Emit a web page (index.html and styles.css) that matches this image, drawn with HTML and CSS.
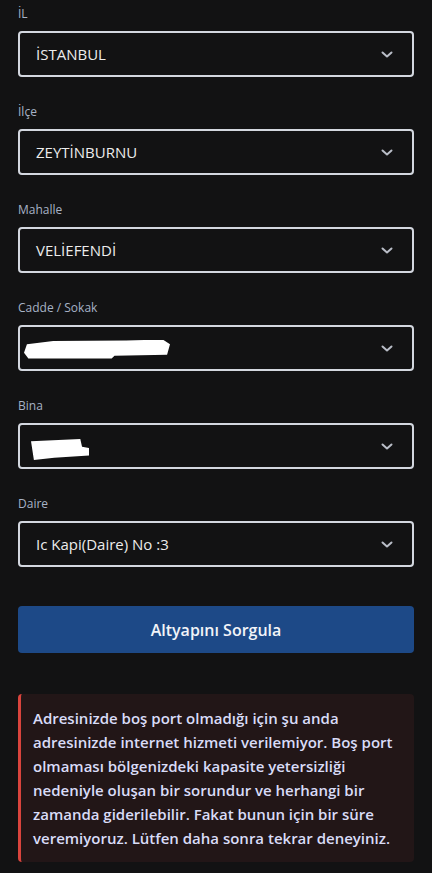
FILE: index.html
```html
<!DOCTYPE html>
<html>
<head>
<meta charset="utf-8">
<link rel="stylesheet" href="styles.css">
</head>
<body>
<div class="form">
  <div class="field">
    <div class="label">İL</div>
    <div class="select"><span class="value">İSTANBUL</span><svg class="chev" viewBox="0 0 12 7"><path d="M1.5 1.5 L6 5.5 L10.5 1.5"/></svg></div>
  </div>
  <div class="field">
    <div class="label">İlçe</div>
    <div class="select"><span class="value">ZEYTİNBURNU</span><svg class="chev" viewBox="0 0 12 7"><path d="M1.5 1.5 L6 5.5 L10.5 1.5"/></svg></div>
  </div>
  <div class="field">
    <div class="label">Mahalle</div>
    <div class="select"><span class="value">VELİEFENDİ</span><svg class="chev" viewBox="0 0 12 7"><path d="M1.5 1.5 L6 5.5 L10.5 1.5"/></svg></div>
  </div>
  <div class="field">
    <div class="label">Cadde / Sokak</div>
    <div class="select"><span class="blob blob-street"></span><svg class="chev" viewBox="0 0 12 7"><path d="M1.5 1.5 L6 5.5 L10.5 1.5"/></svg></div>
  </div>
  <div class="field">
    <div class="label">Bina</div>
    <div class="select"><span class="blob blob-bina"></span><svg class="chev" viewBox="0 0 12 7"><path d="M1.5 1.5 L6 5.5 L10.5 1.5"/></svg></div>
  </div>
  <div class="field last">
    <div class="label">Daire</div>
    <div class="select"><span class="value">Ic Kapi(Daire) No :3</span><svg class="chev" viewBox="0 0 12 7"><path d="M1.5 1.5 L6 5.5 L10.5 1.5"/></svg></div>
  </div>
  <button class="btn">Altyapını Sorgula</button>
  <div class="alert">Adresinizde boş port olmadığı için şu anda adresinizde internet hizmeti verilemiyor. Boş port olmaması bölgenizdeki kapasite yetersizliği nedeniyle oluşan bir sorundur ve herhangi bir zamanda giderilebilir. Fakat bunun için bir süre veremiyoruz. Lütfen daha sonra tekrar deneyiniz.</div>
</div>
</body>
</html>
```
FILE: styles.css
```css
html, body {
  margin: 0;
  padding: 0;
  background: #121213;
}
body {
  font-family: "Open Sans", "Noto Sans", sans-serif;
  color: #e6e6e6;
}
.form {
  padding: 5px 18px 0 18px;
  display: flex;
  flex-direction: column;
}
.field {
  margin-bottom: 26px;
}
.field.last {
  margin-bottom: 39px;
}
.label {
  font-size: 12px;
  line-height: 18px;
  color: #a7b2c6;
  margin-bottom: 8px;
}
.select {
  box-sizing: border-box;
  height: 46px;
  border: 2px solid #d3d7df;
  border-radius: 4px;
  display: flex;
  align-items: center;
  padding: 0 19px 0 16px;
}
.value {
  flex: 1;
  font-size: 15px;
  color: #ececec;
}
.chev {
  width: 12px;
  height: 7px;
  margin-left: auto;
  fill: none;
  stroke: #b9bdc7;
  stroke-width: 2;
  stroke-linecap: round;
  stroke-linejoin: round;
}
.blob {
  display: block;
  background: #ffffff;
}
.blob-street {
  width: 146px;
  height: 19px;
  margin-left: -12px;
  margin-top: 2px;
  clip-path: polygon(2% 25%, 20% 8%, 70% 5%, 95% 0, 100% 25%, 98% 80%, 62% 85%, 60% 100%, 3% 100%, 0 70%);
}
.blob-bina {
  width: 58px;
  height: 22px;
  margin-left: -5px;
  margin-top: 6px;
  clip-path: polygon(0 15%, 85% 5%, 88% 40%, 100% 45%, 100% 80%, 40% 90%, 5% 100%);
}
.btn {
  height: 47px;
  border: none;
  border-radius: 4px;
  background: #1d4987;
  color: #f2f4f8;
  font-family: "Open Sans", "Noto Sans", sans-serif;
  font-size: 16px;
  font-weight: 600;
  margin-bottom: 41px;
  padding: 0;
}
.alert {
  background: #221617;
  border-left: 3px solid #d9443d;
  border-radius: 4px;
  padding: 12px 18px 12px 12px;
  font-size: 15px;
  line-height: 24px;
  font-weight: 600;
  color: #d9dcf7;
}
```
